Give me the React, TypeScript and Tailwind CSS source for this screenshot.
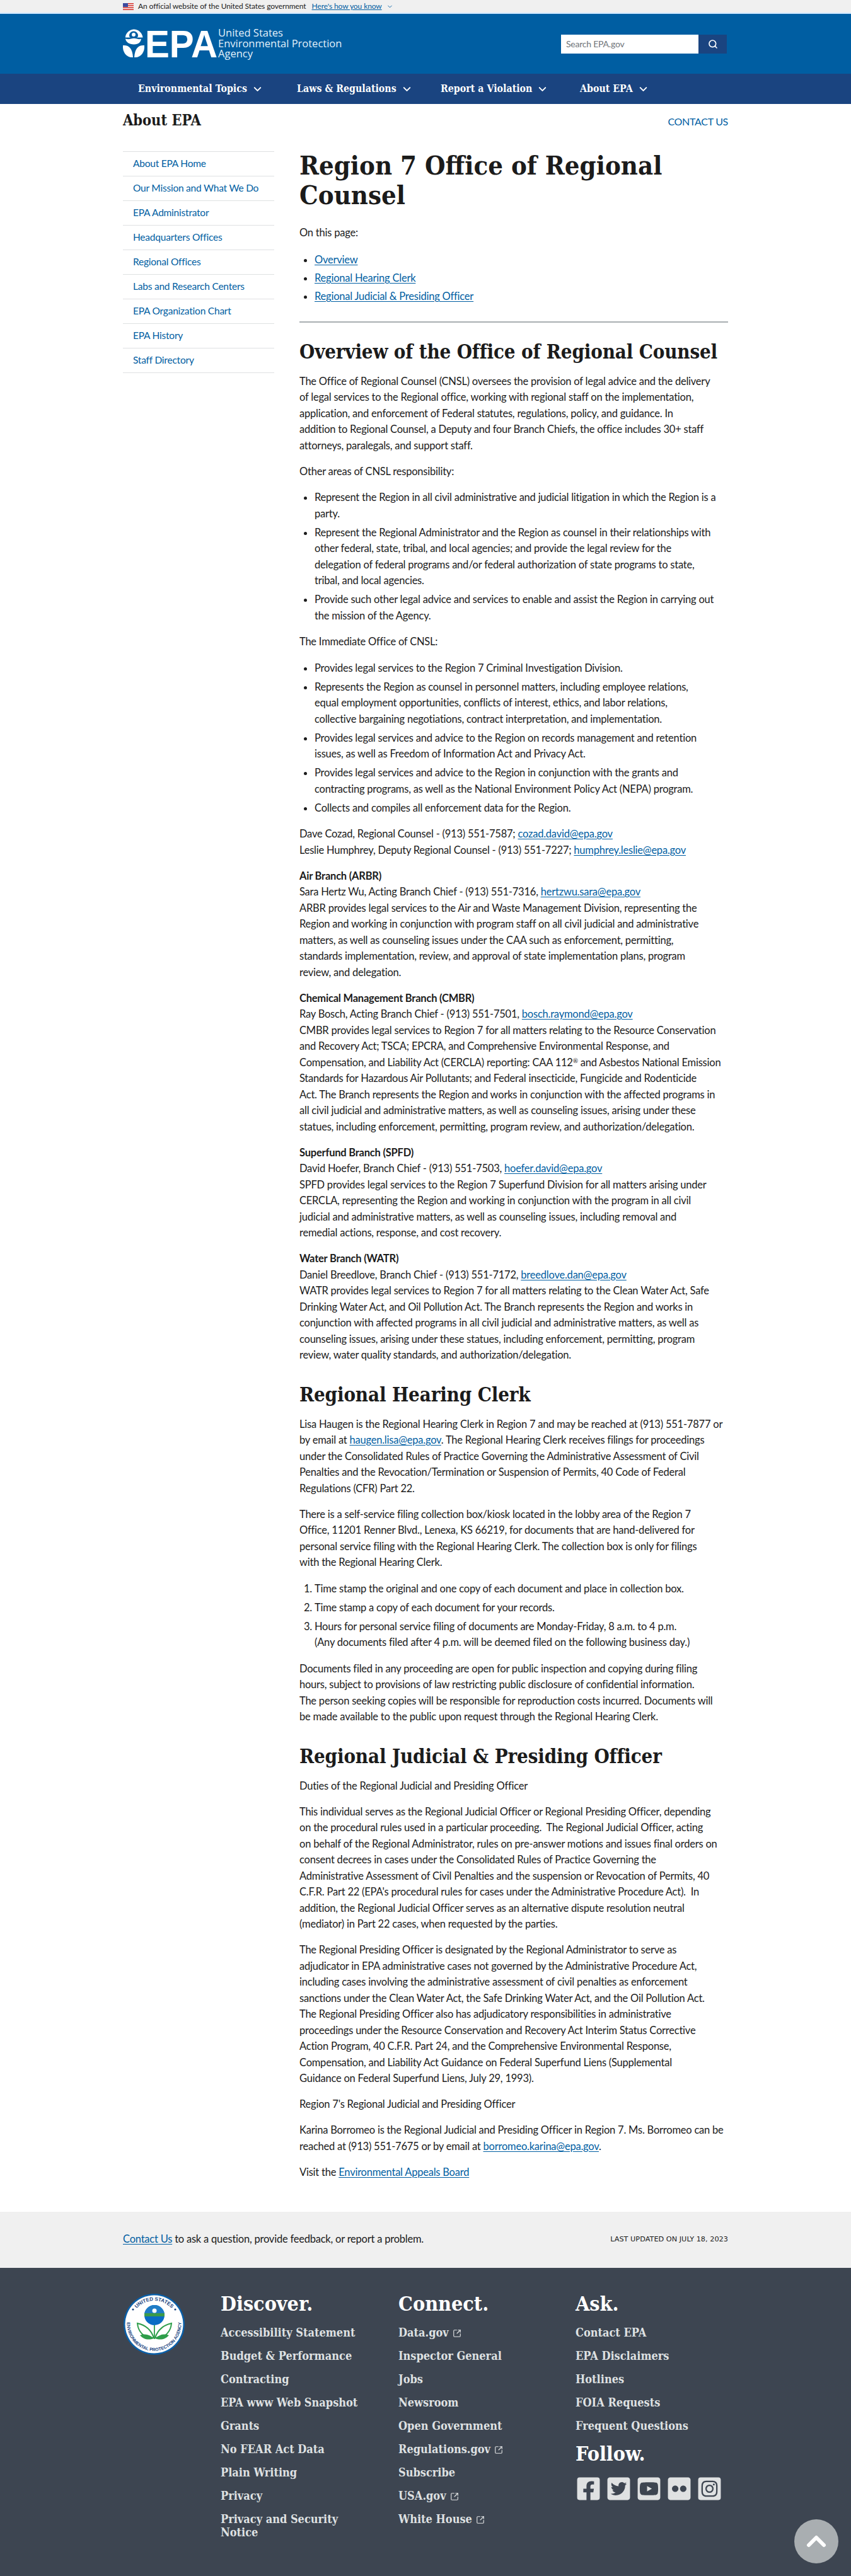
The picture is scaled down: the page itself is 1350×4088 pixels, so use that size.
import type { ReactNode } from 'react';
import { FaFacebookSquare, FaTwitterSquare, FaYoutubeSquare, FaFlickr, FaInstagramSquare } from 'react-icons/fa';
import { ChevronDown, ChevronUp, Search, SquareArrowOutUpRight } from 'lucide-react';

const sans = 'font-["Lato","Noto_Sans",sans-serif]';

const sideLinks = [
  'About EPA Home',
  'Our Mission and What We Do',
  'EPA Administrator',
  'Headquarters Offices',
  'Regional Offices',
  'Labs and Research Centers',
  'EPA Organization Chart',
  'EPA History',
  'Staff Directory',
];

const topNav = [
  { label: 'Environmental Topics', w: 'w-[252px]' },
  { label: 'Laws & Regulations', w: 'w-[228px]' },
  { label: 'Report a Violation', w: 'w-[221px]' },
  { label: 'About EPA', w: 'w-[120px]' },
];

function A({ children }: { children: ReactNode }) {
  return <a className="text-[#005ea2] underline underline-offset-2">{children}</a>;
}

function P({ children, className = 'mb-[15.5px]' }: { children: ReactNode; className?: string }) {
  return <p className={className}>{children}</p>;
}

function Bullets({ items }: { items: ReactNode[] }) {
  return (
    <ul className="list-disc pl-[24px] mb-[16px]">
      {items.map((item, i) => (
        <li key={i} className="mb-[4.5px]">{item}</li>
      ))}
    </ul>
  );
}

function H2({ children }: { children: ReactNode }) {
  return <h2 className={'font-["DejaVu_Serif",serif] [font-stretch:condensed] font-bold text-[31px] leading-[36px] tracking-[-0.15px] text-[#1b1b1b] mt-[31px] mb-[17px]'}>{children}</h2>;
}

function EpaLogo() {
  return (
    <svg width="150" height="48" viewBox="0 0 150 48" className="shrink-0 overflow-visible">
      <g fill="#fff">
        <path d="M14 1.5a14.5 14.5 0 0 1 14.5 13H19a3 3 0 0 0 2-3 7 7 0 0 0-14 0 3 3 0 0 0 2 3H.8A14.5 14.5 0 0 1 14 1.5z" transform="translate(3 0)" />
        <circle cx="17" cy="10" r="3" />
        <path d="M4 16.5c3 1 6 1 9 0s6-1 9 0 5 1 7 0c-.5 5-4 9-11.5 9S4.500 21.500 4 16.500z" />
        <path d="M0 27c9-1 15 4 16 19C6 47-1 38 0 27z" />
        <path d="M34 27c-9-1-15 4-16 19 10 1 17-8 16-19z" />
      </g>
      <text x="35" y="46" textLength="115" lengthAdjust="spacingAndGlyphs" fill="#fff" className='font-["Liberation_Sans",sans-serif] font-bold text-[62px]'>EPA</text>
    </svg>
  );
}

function UsFlag() {
  return (
    <svg width="17" height="11" viewBox="0 0 17 11" className="shrink-0">
      <rect width="17" height="11" fill="#f4f4f4" />
      <rect y="0" width="17" height="1.6" fill="#d83933" />
      <rect y="3.1" width="17" height="1.6" fill="#d83933" />
      <rect y="6.300" width="17" height="1.6" fill="#d83933" />
      <rect y="9.400" width="17" height="1.6" fill="#d83933" />
      <rect width="8" height="6" fill="#3c4a9e" />
    </svg>
  );
}

function Seal() {
  return (
    <svg width="97" height="97" viewBox="0 0 97 97" className="shrink-0">
      <circle cx="48.500" cy="48.500" r="48.500" fill="#0a5fa8" />
      <circle cx="48.500" cy="48.500" r="46" fill="#fff" />
      <defs>
        <path id="sealTop" d="M11 48.500A37.500 37.500 0 0 1 86 48.500" />
        <path id="sealBottom" d="M8 33.500A43 43 0 1 0 89 33.500" />
      </defs>
      <text className='font-["Liberation_Sans",sans-serif] font-bold text-[8px]' fill="#1a4480">
        <textPath href="#sealTop" startOffset="50%" textAnchor="middle">UNITED STATES</textPath>
      </text>
      <text className='font-["Liberation_Sans",sans-serif] font-bold text-[7px]' fill="#1a4480">
        <textPath href="#sealBottom" startOffset="50%" textAnchor="middle">ENVIRONMENTAL PROTECTION AGENCY</textPath>
      </text>
      <circle cx="15" cy="25" r="1.600" fill="#1a4480" />
      <circle cx="82" cy="25" r="1.600" fill="#1a4480" />
      <circle cx="49" cy="34" r="16" fill="#0a6cc4" />
      <path d="M33 34a16 16 0 0 1 32 0z" fill="#1f7cc6" />
      <rect x="33" y="31" width="32" height="5" fill="#3b9a4a" />
      <circle cx="49" cy="27" r="3.500" fill="#fff" />
      <path d="M48 70C44 58 36 50 22 47c1 12 9 24 26 23z" fill="#fff" stroke="#2e9e4a" strokeWidth="2" />
      <path d="M50 70c4-12 12-20 26-23-1 12-9 24-26 23z" fill="#fff" stroke="#2e9e4a" strokeWidth="2" />
      <path d="M26 66c8-3 16-1 22 5-8 3-16 2-22-5zM72 66c-8-3-16-1-22 5 8 3 16 2 22-5z" fill="#2e9e4a" />
      <rect x="48" y="50" width="1.800" height="22" fill="#2e9e4a" />
    </svg>
  );
}

function FooterLink({ children, ext }: { children: ReactNode; ext?: boolean }) {
  return (
    <li className="mb-[16px] leading-[21px]">
      <a className="text-[#dfe1e2]">
        {children}
        {ext && <SquareArrowOutUpRight size={14} className="inline ml-[6px] align-[-2px]" />}
      </a>
    </li>
  );
}

function FooterHead({ children, className = 'mb-[17.5px]' }: { children: ReactNode; className?: string }) {
  return <h3 className={'text-white text-[32px] leading-[36px] ' + className}>{children}</h3>;
}

export default function App() {
  return (
    <div className={sans + ' bg-white text-[#1b1b1b] text-[16.5px] leading-[25.500px] tracking-[-0.22px]'}>
      {/* gov banner */}
      <div className="h-[20px] bg-[#f0f0f0]">
        <div className="mx-[195px] h-full flex items-center gap-[7px] text-[12px] leading-[20px] tracking-[-0.1px]">
          <UsFlag />
          <span>An official website of the United States government</span>
          <a className="ml-[2px] text-[#005ea2] underline">Here's how you know</a>
          <ChevronDown size={11} className="text-[#005ea2]" />
        </div>
      </div>
      <div className="h-[2px] bg-[#cfe8ff]" />

      {/* masthead */}
      <header className="h-[95px] bg-[#005ea2]">
        <div className="mx-[195px] w-[958px] h-full flex items-center justify-between">
          <div className="flex items-center gap-[1px] -mt-[1px]">
            <EpaLogo />
            <div className='font-["Open_Sans",sans-serif] text-[#e3f0fa] text-[16.500px] leading-[16.500px] tracking-normal'>
              United States<br />Environmental Protection<br />Agency
            </div>
          </div>
          <form className="flex">
            <input
              placeholder="Search EPA.gov"
              className="w-[218px] h-[30px] bg-white px-[8px] text-[14px] text-[#1b1b1b] placeholder:text-[#71767a] outline-none"
            />
            <button type="button" className="w-[45px] h-[30px] bg-[#1a4480] text-white flex items-center justify-center">
              <Search size={16} strokeWidth={2.500} />
            </button>
          </form>
        </div>
      </header>
      <nav className="h-[48px] bg-[#1a4480] pl-[219px] flex items-center">
        {topNav.map((item) => (
          <a key={item.label} className={'flex items-center gap-[7px] text-white font-["DejaVu_Serif",serif] [font-stretch:condensed] font-bold text-[15.800px] tracking-normal ' + item.w}>
            {item.label}
            <ChevronDown size={19} strokeWidth={2.500} />
          </a>
        ))}
      </nav>

      {/* section title */}
      <div className="mx-[195px] w-[960px] flex items-center justify-between h-[52px]">
        <h2 className='font-["DejaVu_Serif",serif] [font-stretch:condensed] font-bold text-[23.400px] leading-[30px] tracking-normal text-[#1b1b1b]'>About EPA</h2>
        <a className="mt-[3px] text-[#005ea2] uppercase text-[16px] tracking-[-0.3px]">Contact Us</a>
      </div>

      <div className="mx-[195px] flex pt-[23px]">
        {/* sidebar */}
        <aside className="w-[240px] shrink-0 mr-[40px] text-[15.500px]">
          <ul className="border-t border-[#dfe1e2]">
            {sideLinks.map((link) => (
              <li key={link} className="h-[39px] border-b border-[#dfe1e2] pl-[16px] flex items-center text-[#005ea2]">
                {link}
              </li>
            ))}
          </ul>
        </aside>

        {/* main content, line ends follow the original page */}
        <main className="w-[680px] whitespace-nowrap">
          <h1 className='font-["DejaVu_Serif",serif] [font-stretch:condensed] font-bold text-[41.500px] leading-[47px] tracking-normal text-[#1b1b1b] mb-[24px] -mt-[1.5px]'>
            Region 7 Office of Regional<br />Counsel
          </h1>
          <P className="mb-[18px]">On this page:</P>
          <ul className="list-disc pl-[24px] mb-[26px]">
            <li className="mb-[3.500px]"><A>Overview</A></li>
            <li className="mb-[3.500px]"><A>Regional Hearing Clerk</A></li>
            <li><A>Regional Judicial &amp; Presiding Officer</A></li>
          </ul>
          <hr className="border-t-2 border-[#a9aeb1] mb-[-3px]" />

          <H2>Overview of the Office of Regional Counsel</H2>
          <P>
            The Office of Regional Counsel (CNSL) oversees the provision of legal advice and the delivery<br />
            of legal services to the Regional office, working with regional staff on the implementation,<br />
            application, and enforcement of Federal statutes, regulations, policy, and guidance. In<br />
            addition to Regional Counsel, a Deputy and four Branch Chiefs, the office includes 30+ staff<br />
            attorneys, paralegals, and support staff.
          </P>
          <P className="mb-[16px]">Other areas of CNSL responsibility:</P>
          <Bullets
            items={[
              <>Represent the Region in all civil administrative and judicial litigation in which the Region is a<br />party.</>,
              <>Represent the Regional Administrator and the Region as counsel in their relationships with<br />other federal, state, tribal, and local agencies; and provide the legal review for the<br />delegation of federal programs and/or federal authorization of state programs to state,<br />tribal, and local agencies.</>,
              <>Provide such other legal advice and services to enable and assist the Region in carrying out<br />the mission of the Agency.</>,
            ]}
          />
          <P className="mb-[16px]">The Immediate Office of CNSL:</P>
          <Bullets
            items={[
              'Provides legal services to the Region 7 Criminal Investigation Division.',
              <>Represents the Region as counsel in personnel matters, including employee relations,<br />equal employment opportunities, conflicts of interest, ethics, and labor relations,<br />collective bargaining negotiations, contract interpretation, and implementation.</>,
              <>Provides legal services and advice to the Region on records management and retention<br />issues, as well as Freedom of Information Act and Privacy Act.</>,
              <>Provides legal services and advice to the Region in conjunction with the grants and<br />contracting programs, as well as the National Environment Policy Act (NEPA) program.</>,
              'Collects and compiles all enforcement data for the Region.',
            ]}
          />
          <P>
            Dave Cozad, Regional Counsel - (913) 551-7587; <A>cozad.david@epa.gov</A>
            <br />
            Leslie Humphrey, Deputy Regional Counsel - (913) 551-7227; <A>humphrey.leslie@epa.gov</A>
          </P>
          <P>
            <strong>Air Branch (ARBR)</strong>
            <br />
            Sara Hertz Wu, Acting Branch Chief - (913) 551-7316, <A>hertzwu.sara@epa.gov</A>
            <br />
            ARBR provides legal services to the Air and Waste Management Division, representing the<br />
            Region and working in conjunction with program staff on all civil judicial and administrative<br />
            matters, as well as counseling issues under the CAA such as enforcement, permitting,<br />
            standards implementation, review, and approval of state implementation plans, program<br />
            review, and delegation.
          </P>
          <P>
            <strong>Chemical Management Branch (CMBR)</strong>
            <br />
            Ray Bosch, Acting Branch Chief - (913) 551-7501, <A>bosch.raymond@epa.gov</A>
            <br />
            CMBR provides legal services to Region 7 for all matters relating to the Resource Conservation<br />
            and Recovery Act; TSCA; EPCRA, and Comprehensive Environmental Response, and<br />
            Compensation, and Liability Act (CERCLA) reporting: CAA 112<sup className="text-[10px] leading-none">®</sup> and Asbestos National Emission<br />
            Standards for Hazardous Air Pollutants; and Federal insecticide, Fungicide and Rodenticide<br />
            Act. The Branch represents the Region and works in conjunction with the affected programs in<br />
            all civil judicial and administrative matters, as well as counseling issues, arising under these<br />
            statues, including enforcement, permitting, program review, and authorization/delegation.
          </P>
          <P>
            <strong>Superfund Branch (SPFD)</strong>
            <br />
            David Hoefer, Branch Chief - (913) 551-7503, <A>hoefer.david@epa.gov</A>
            <br />
            SPFD provides legal services to the Region 7 Superfund Division for all matters arising under<br />
            CERCLA, representing the Region and working in conjunction with the program in all civil<br />
            judicial and administrative matters, as well as counseling issues, including removal and<br />
            remedial actions, response, and cost recovery.
          </P>
          <P className="mb-0">
            <strong>Water Branch (WATR)</strong>
            <br />
            Daniel Breedlove, Branch Chief - (913) 551-7172, <A>breedlove.dan@epa.gov</A>
            <br />
            WATR provides legal services to Region 7 for all matters relating to the Clean Water Act, Safe<br />
            Drinking Water Act, and Oil Pollution Act. The Branch represents the Region and works in<br />
            conjunction with affected programs in all civil judicial and administrative matters, as well as<br />
            counseling issues, arising under these statues, including enforcement, permitting, program<br />
            review, water quality standards, and authorization/delegation.
          </P>

          <H2>Regional Hearing Clerk</H2>
          <P>
            Lisa Haugen is the Regional Hearing Clerk in Region 7 and may be reached at (913) 551-7877 or<br />
            by email at <A>haugen.lisa@epa.gov</A>. The Regional Hearing Clerk receives filings for proceedings<br />
            under the Consolidated Rules of Practice Governing the Administrative Assessment of Civil<br />
            Penalties and the Revocation/Termination or Suspension of Permits, 40 Code of Federal<br />
            Regulations (CFR) Part 22.
          </P>
          <P className="mb-[16px]">
            There is a self-service filing collection box/kiosk located in the lobby area of the Region 7<br />
            Office, 11201 Renner Blvd., Lenexa, KS 66219, for documents that are hand-delivered for<br />
            personal service filing with the Regional Hearing Clerk. The collection box is only for filings<br />
            with the Regional Hearing Clerk.
          </P>
          <ol className="list-decimal pl-[24px] mb-[16px]">
            <li className="mb-[4.500px]">Time stamp the original and one copy of each document and place in collection box.</li>
            <li className="mb-[4.500px]">Time stamp a copy of each document for your records.</li>
            <li>Hours for personal service filing of documents are Monday-Friday, 8 a.m. to 4 p.m.<br />(Any documents filed after 4 p.m. will be deemed filed on the following business day.)</li>
          </ol>
          <P className="mb-0">
            Documents filed in any proceeding are open for public inspection and copying during filing<br />
            hours, subject to provisions of law restricting public disclosure of confidential information.<br />
            The person seeking copies will be responsible for reproduction costs incurred. Documents will<br />
            be made available to the public upon request through the Regional Hearing Clerk.
          </P>

          <H2>Regional Judicial &amp; Presiding Officer</H2>
          <P>Duties of the Regional Judicial and Presiding Officer</P>
          <P>
            This individual serves as the Regional Judicial Officer or Regional Presiding Officer, depending<br />
            on the procedural rules used in a particular proceeding.&nbsp; The Regional Judicial Officer, acting<br />
            on behalf of the Regional Administrator, rules on pre-answer motions and issues final orders on<br />
            consent decrees in cases under the Consolidated Rules of Practice Governing the<br />
            Administrative Assessment of Civil Penalties and the suspension or Revocation of Permits, 40<br />
            C.F.R. Part 22 (EPA's procedural rules for cases under the Administrative Procedure Act).&nbsp; In<br />
            addition, the Regional Judicial Officer serves as an alternative dispute resolution neutral<br />
            (mediator) in Part 22 cases, when requested by the parties.
          </P>
          <P>
            The Regional Presiding Officer is designated by the Regional Administrator to serve as<br />
            adjudicator in EPA administrative cases not governed by the Administrative Procedure Act,<br />
            including cases involving the administrative assessment of civil penalties as enforcement<br />
            sanctions under the Clean Water Act, the Safe Drinking Water Act, and the Oil Pollution Act.<br />
            The Regional Presiding Officer also has adjudicatory responsibilities in administrative<br />
            proceedings under the Resource Conservation and Recovery Act Interim Status Corrective<br />
            Action Program, 40 C.F.R. Part 24, and the Comprehensive Environmental Response,<br />
            Compensation, and Liability Act Guidance on Federal Superfund Liens (Supplemental<br />
            Guidance on Federal Superfund Liens, July 29, 1993).
          </P>
          <P>Region 7's Regional Judicial and Presiding Officer</P>
          <P>
            Karina Borromeo is the Regional Judicial and Presiding Officer in Region 7. Ms. Borromeo can be<br />
            reached at (913) 551-7675 or by email at <A>borromeo.karina@epa.gov</A>.
          </P>
          <P className="mb-[49.500px]">Visit the <A>Environmental Appeals Board</A></P>
        </main>
      </div>

      {/* last updated band */}
      <div className="h-[89px] bg-[#f0f0f0] px-[195px] flex items-center justify-between">
        <p><A>Contact Us</A> to ask a question, provide feedback, or report a problem.</p>
        <p className='font-["DejaVu_Sans",sans-serif] text-[11.300px] tracking-normal uppercase text-[#1b1b1b]'>Last updated on July 18, 2023</p>
      </div>

      {/* footer */}
      <footer className='relative h-[490px] bg-[#3d4551] px-[196px] pt-[41px] flex font-["DejaVu_Serif",serif] [font-stretch:condensed] font-bold text-[18px] tracking-normal'>
        <div className="w-[154px] shrink-0"><Seal /></div>
        <div className="w-[282px] shrink-0 -mt-[2px]">
          <FooterHead>Discover.</FooterHead>
          <ul className="w-[235px]">
            {['Accessibility Statement', 'Budget & Performance', 'Contracting', 'EPA www Web Snapshot', 'Grants', 'No FEAR Act Data', 'Plain Writing', 'Privacy', 'Privacy and Security Notice'].map((t) => (
              <FooterLink key={t}>{t}</FooterLink>
            ))}
          </ul>
        </div>
        <div className="w-[281px] shrink-0 -mt-[2px]">
          <FooterHead>Connect.</FooterHead>
          <ul>
            <FooterLink ext>Data.gov</FooterLink>
            <FooterLink>Inspector General</FooterLink>
            <FooterLink>Jobs</FooterLink>
            <FooterLink>Newsroom</FooterLink>
            <FooterLink>Open Government</FooterLink>
            <FooterLink ext>Regulations.gov</FooterLink>
            <FooterLink>Subscribe</FooterLink>
            <FooterLink ext>USA.gov</FooterLink>
            <FooterLink ext>White House</FooterLink>
          </ul>
        </div>
        <div className="-mt-[2px]">
          <FooterHead>Ask.</FooterHead>
          <ul>
            {['Contact EPA', 'EPA Disclaimers', 'Hotlines', 'FOIA Requests', 'Frequent Questions'].map((t) => (
              <FooterLink key={t}>{t}</FooterLink>
            ))}
          </ul>
          <FooterHead className="mt-[16px] mb-[17px]">Follow.</FooterHead>
          <div className="flex gap-[7px] text-[#dfe1e2]">
            <FaFacebookSquare size={41} />
            <FaTwitterSquare size={41} />
            <FaYoutubeSquare size={41} />
            <FaFlickr size={41} />
            <FaInstagramSquare size={41} />
          </div>
        </div>
        <a className="absolute left-[1260px] top-[399px] w-[70px] h-[70px] rounded-full bg-[#a9aeb1] flex items-center justify-center text-white">
          <ChevronUp size={48} strokeWidth={3} />
        </a>
      </footer>
    </div>
  );
}
